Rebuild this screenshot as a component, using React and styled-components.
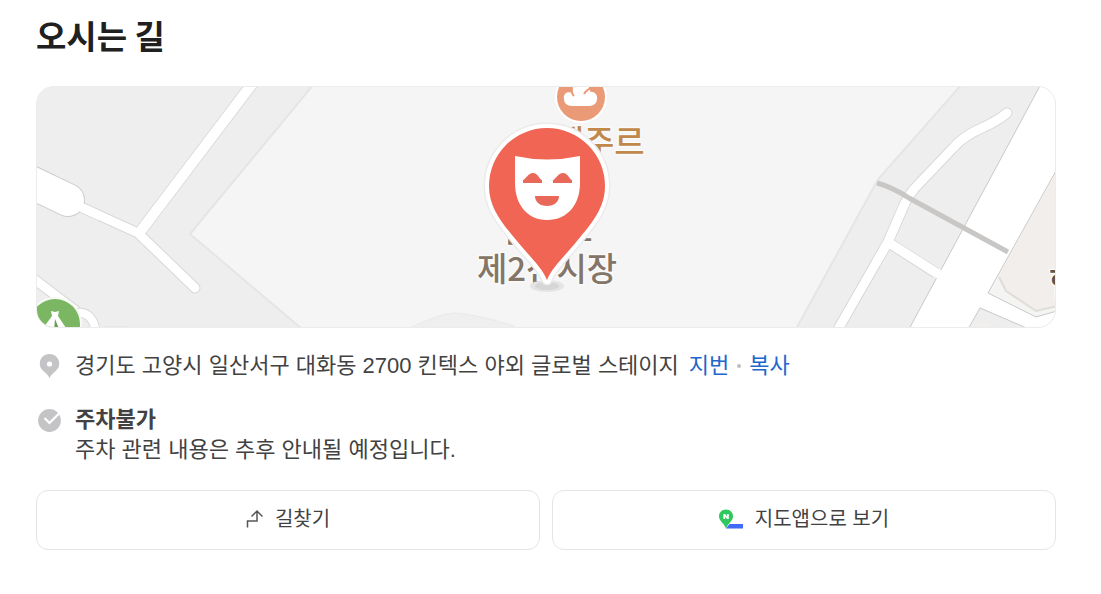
import React from "react";
import styled, { createGlobalStyle } from "styled-components";

const textFonts = `"Liberation Sans", "Noto Sans CJK KR", sans-serif`;
const koreanFonts = `"Noto Sans CJK KR", "Noto Sans", sans-serif`;

const GlobalStyle = createGlobalStyle`
  *, *::before, *::after { box-sizing: border-box; }
  body {
    margin: 0;
    background: #fff;
    color: #424242;
    font-family: ${textFonts};
    font-size: 22px;
    line-height: 30px;
  }
`;

const Section = styled.section`
  padding: 11px 45px 44px 36px;
`;

const Title = styled.h2`
  margin: 0 0 27px;
  font-family: ${koreanFonts};
  font-size: 33px;
  font-weight: 700;
  line-height: 48px;
  color: #202020;
`;

const MapFrame = styled.div`
  border: 1px solid #ececec;
  border-radius: 18px;
  overflow: hidden;
  background: #eeeeee;
`;

const MapDrawing = styled.svg`
  display: block;
  width: 100%;
  height: 240px;
`;

const InfoList = styled.ul`
  display: flex;
  flex-direction: column;
  gap: 24px;
  margin: 23px 0 25px;
  padding: 0;
  list-style: none;
`;

const InfoItem = styled.li`
  display: flex;
  gap: 12px;
`;

const InfoIcon = styled.svg`
  flex: none;
  width: 27px;
  height: 30px;
`;

const InfoBody = styled.div`
  display: flex;
  flex-direction: column;
`;

const AddressLine = styled.div`
  display: flex;
  flex-wrap: wrap;
  align-items: center;
`;

const Address = styled.span`
  margin-right: 10px;
`;

const TextButton = styled.button`
  padding: 0;
  border: 0;
  background: none;
  color: #2166cc;
  font: inherit;
  cursor: pointer;
`;

const Dot = styled.span`
  width: 4px;
  height: 4px;
  margin: 0 8px;
  border-radius: 50%;
  background: #bdbdbd;
`;

const Actions = styled.div`
  display: grid;
  grid-template-columns: 1fr 1fr;
  gap: 12px;
`;

const ActionButton = styled.button`
  display: flex;
  align-items: center;
  justify-content: center;
  gap: 12px;
  height: 60px;
  padding: 0 16px 2px;
  border: 1px solid #e5e5e5;
  border-radius: 12px;
  background: #fff;
  color: #424242;
  font-family: inherit;
  font-size: 20px;
  line-height: 30px;
  cursor: pointer;
`;

const ActionIcon = styled.svg`
  flex: none;
  width: ${(p) => p.$width}px;
  height: 20px;
`;

const MapLabel = styled.text`
  font-family: ${koreanFonts};
  font-size: 33px;
  font-weight: 500;
  fill: ${(p) => p.$color};
  stroke: #fafafa;
  stroke-width: 3px;
  stroke-linejoin: round;
  paint-order: stroke;
  text-anchor: middle;
`;

const Road = ({ d, width, edge = "#d8d8d8", cap = "round" }) => (
  <g fill="none" strokeLinecap={cap} strokeLinejoin="round">
    <path d={d} stroke={edge} strokeWidth={width + 2} />
    <path d={d} stroke="#fff" strokeWidth={width} />
  </g>
);

const pinShape =
  "M547 280C541 266 529 256 517 241C502 223 489 208 489 186A58 58 0 0 1 605 186C605 208 592 223 577 241C565 256 553 266 547 280Z";

const MaskPin = () => (
  <g strokeLinejoin="round">
    <ellipse cx="547" cy="286" rx="17" ry="6" fill="#e4e4e4" />
    <ellipse cx="547" cy="286" rx="12" ry="4" fill="#d6d6d6" />
    <path d={pinShape} fill="none" stroke="#ebebeb" strokeWidth="11" />
    <path d={pinShape} fill="#f06553" stroke="#fff" strokeWidth="8" paintOrder="stroke" />
    <path
      d="M515 156Q547 163 580 156V183C580 204 568 220 547 220C527 220 515 204 515 183Z"
      fill="#fff"
    />
    <path
      d="M523 183V180C526 179 528 173 533 173C538 173 539 179 542 180V183ZM553 183V180C556 179 558 173 563 173C568 173 569 179 572 180V183ZM535 196H559C559 202 554 206 547 206C540 206 535 202 535 196Z"
      fill="#e8695a"
    />
  </g>
);

const VenueMap = () => (
  <MapDrawing
    viewBox="37 87 1018 240"
    preserveAspectRatio="xMidYMid slice"
    role="img"
    aria-label="지도"
  >
    <rect x="0" y="0" width="1101" height="400" fill="#eeeeee" />
    <path
      d="M314 84L190 234L302 329H796L876 183L880 177L962 84Z"
      fill="#f5f5f5" stroke="#e5e5e5" strokeWidth="2"
    />
    <path d="M408 329Q440 313 455 313Q480 315 514 326V329Z" fill="#efefef" stroke="#e9e9e9" />

    <Road d="M252 84L140 232" width={10} />
    <Road d="M72 203L138 233L195 288" width={9} />
    <path d="M252 84L140 232" stroke="#fff" strokeWidth="10" />
    <Road d="M20 177L68 200" width={32} edge="#cccccc" />
    <path d="M70 202L100 216" fill="none" stroke="#fff" strokeWidth="9" />
    <Road d="M30 276L76 311" width={9} />
    <Road d="M76 313Q92 310 96 332" width={8} />
    <path d="M104 327H128" stroke="#dedede" />

    <circle cx="55" cy="324" r="27" fill="#f6fbf3" />
    <circle cx="55" cy="324" r="25" fill="#7bb662" />
    <path d="M51 311L55 312L59 311L58 316L68 331H41L52 316Z" fill="#fff" />
    <path d="M55 319L60 331H54Z" fill="#6a9d55" />

    <path d="M1041 84L908 331H968L980 308L1032 331H1070V84Z" fill="#fff" stroke="#c8c8c8" />
    <path d="M1057 169L988 293L1036 317L1057 311Z" fill="#f4f4f3" stroke="#c8c8c8" />
    <path d="M1057 171L999 275L1006 291L1036 311L1057 306Z" fill="#f1eeeb" />
    <path d="M999 277L1006 291L1036 311L1057 306" fill="none" stroke="#deddda" strokeWidth="2" />
    <path d="M980 308L1029 329H968Z" fill="#eeeeee" stroke="#cccccc" />
    <path d="M972 325L985 321L994 329H970Z" fill="#f1eeeb" />

    <Road d="M1007 113Q999 120 984 127Q963 136 953 148L914 189Q909 195 905 203L888 242L837 331" width={9} />
    <Road d="M889 243L936 273" width={9} cap="butt" />
    <path d="M905 203L888 242L876 263M888 242L940 275" fill="none" stroke="#fff" strokeWidth="9" />
    <path d="M877 183Q892 187 909 198L1008 252" fill="none" stroke="#c9c7c6" strokeWidth="5" />
    <MapLabel x="1064" y="294" $color="#5d554f">현</MapLabel>

    <circle cx="581" cy="97" r="26" fill="#fff" />
    <circle cx="581" cy="97" r="24" fill="#eb9a77" />
    <path
      d="M564 99C563 94 567 91 572 93C571 87 575 84 581 85C587 84 591 88 590 92C594 91 598 95 597 99C597 103 594 106 589 106H572C567 106 564 103 564 99Z"
      fill="#fff"
    />
    <path d="M572 88Q571 93 574 96M592 88Q587 89 584 94" fill="none" stroke="#eb9a77" strokeWidth="2" />
    <MapLabel x="584" y="154" $color="#c0894a">뚜레주르</MapLabel>
    <MapLabel x="547" y="242" $color="#837567">킨텍스</MapLabel>
    <MapLabel x="547" y="281" $color="#837567">제2전시장</MapLabel>
    <MaskPin />
  </MapDrawing>
);

const PlaceIcon = () => (
  <InfoIcon viewBox="0 0 27 30" aria-hidden="true">
    <path
      d="M13.5 3C7.9 3 3.8 7.2 3.8 12.5C3.8 17.5 6.6 19.3 9.6 21.9C11.5 23.5 12.5 25 13.5 27C14.5 25 15.5 23.5 17.4 21.9C20.4 19.3 23.2 17.5 23.2 12.5C23.2 7.2 19.1 3 13.5 3Z"
      fill="#c4c4c6"
    />
    <circle cx="13.5" cy="13" r="2.6" fill="#fff" />
  </InfoIcon>
);

const CheckIcon = () => (
  <InfoIcon viewBox="0 0 27 30" aria-hidden="true">
    <circle cx="13.5" cy="15.5" r="11.4" fill="#c4c4c6" />
    <path d="M8.5 13L13.5 18L23 8.5" fill="none" stroke="#fff" strokeWidth="2.2" />
  </InfoIcon>
);

const RouteIcon = () => (
  <ActionIcon
    $width={17}
    viewBox="0 0 17 20"
    fill="none"
    stroke="#555"
    strokeWidth="1.5"
    aria-hidden="true"
  >
    <path d="M1.5 18.5V12H11V2M5.5 7.5L11 2L16.5 7.5" />
  </ActionIcon>
);

const MapAppIcon = () => (
  <ActionIcon $width={24} viewBox="0 0 24 20" aria-hidden="true">
    <path d="M10.5 15H24V19.5H7Z" fill="#3f6bf5" />
    <path
      d="M7 0.5C3 0.5 0 3.4 0 7.2C0 12 5 14 7 19.5C9 14 14 12 14 7.2C14 3.4 11 0.5 7 0.5Z"
      fill="#2dc95f"
    />
    <path d="M4.4 10V5H6.3L8 7.5V5H9.8V10H8L6.2 7.4V10Z" fill="#fff" />
  </ActionIcon>
);

export default function App() {
  return (
    <>
      <GlobalStyle />
      <Section aria-labelledby="directions-title">
        <Title id="directions-title">오시는 길</Title>
        <MapFrame>
          <VenueMap />
        </MapFrame>
        <InfoList>
          <InfoItem>
            <PlaceIcon />
            <AddressLine>
              <Address>경기도 고양시 일산서구 대화동 2700 킨텍스 야외 글로벌 스테이지</Address>
              <TextButton type="button">지번</TextButton>
              <Dot />
              <TextButton type="button">복사</TextButton>
            </AddressLine>
          </InfoItem>
          <InfoItem>
            <CheckIcon />
            <InfoBody>
              <strong>주차불가</strong>
              <span>주차 관련 내용은 추후 안내될 예정입니다.</span>
            </InfoBody>
          </InfoItem>
        </InfoList>
        <Actions>
          <ActionButton type="button">
            <RouteIcon />
            길찾기
          </ActionButton>
          <ActionButton type="button">
            <MapAppIcon />
            지도앱으로 보기
          </ActionButton>
        </Actions>
      </Section>
    </>
  );
}
